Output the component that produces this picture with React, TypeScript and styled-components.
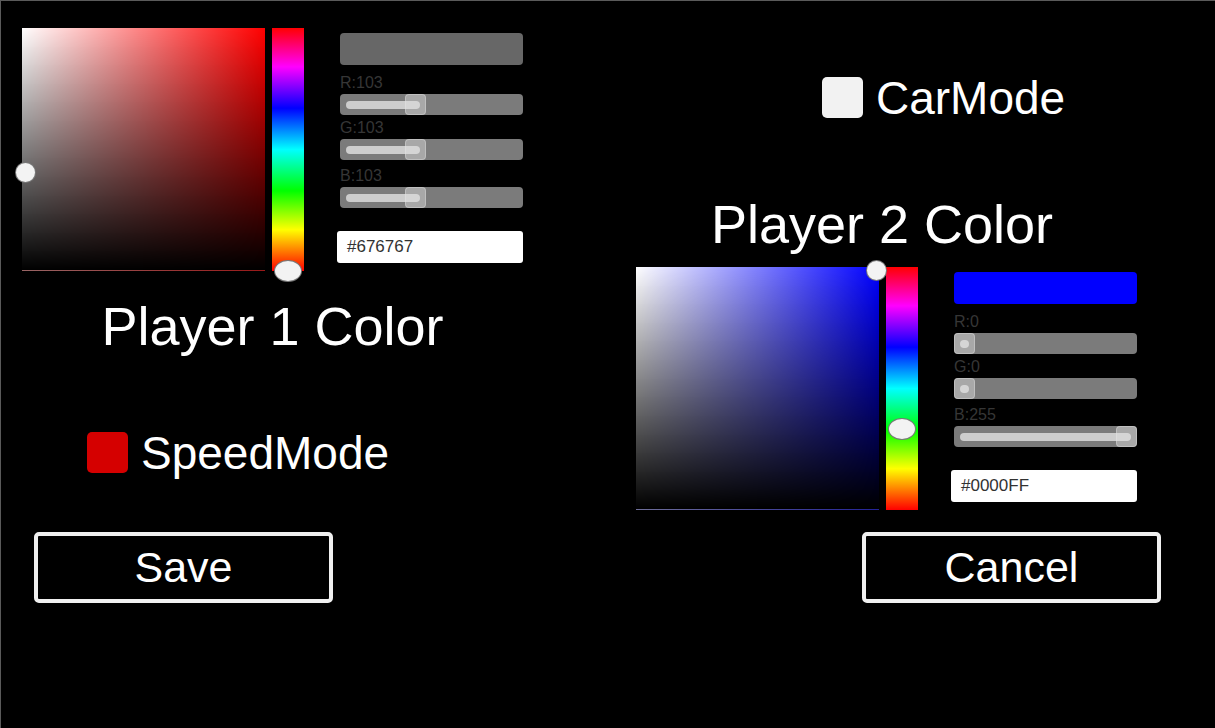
import { ReactElement } from "react";
import styled, { createGlobalStyle } from "styled-components";

const GlobalStyle = createGlobalStyle`
  html, body {
    margin: 0;
    padding: 0;
    background: #000000;
  }

  * {
    box-sizing: border-box;
  }
`;

type Channel = { name: string; value: number; space: number };

type PickerProps = {
  hue: string;
  edge: string;
  swatch: string;
  hex: string;
  channels: Channel[];
  sat: number;
  val: number;
  hueAt: number;
};

const SQUARE = 243;
const TRACK = 183;
const KNOB = 21;

const ColorPicker = ({ hue, edge, swatch, hex, channels, sat, val, hueAt }: PickerProps): ReactElement => {
  return (
    <PickerRow>
      <SvSquare $hue={hue} $edge={edge}>
        <SvHandle
          style={{
            left: 3 + sat * (SQUARE - 6) - 10.5,
            top: 3 + (1 - val) * (SQUARE - 6) - 10.5,
          }}
        />
      </SvSquare>

      <HueBar>
        <HueHandle style={{ top: hueAt * SQUARE - 11 }} />
      </HueBar>

      <Panel>
        <Swatch $color={swatch} />
        {channels.map((ch) => {
          const knobLeft = (ch.value / 255) * (TRACK - KNOB);
          return (
            <div key={ch.name}>
              <ChannelLabel $space={ch.space}>
                {ch.name}:{ch.value}
              </ChannelLabel>
              <Track>
                <Fill style={{ width: knobLeft + 8.5 }} />
                <Knob style={{ left: knobLeft }} />
              </Track>
            </div>
          );
        })}
        <HexField>{hex}</HexField>
      </Panel>
    </PickerRow>
  );
};

const App = (): ReactElement => {
  return (
    <>
      <GlobalStyle />
      <Page>
        <LeftColumn>
          <ColorPicker
            hue="#ff0000"
            edge="rgba(110, 35, 35, 0.7)"
            swatch="#676767"
            hex="#676767"
            channels={[
              { name: "R", value: 103, space: 29 },
              { name: "G", value: 103, space: 24 },
              { name: "B", value: 103, space: 27 },
            ]}
            sat={0}
            val={0.404}
            hueAt={1}
          />
          <Title>Player 1 Color</Title>
          <ToggleRow $indent={65} $top={79}>
            <CheckBox $color="#d50000" />
            <ToggleText>SpeedMode</ToggleText>
          </ToggleRow>
          <OutlineButton $indent={12} $top={59}>
            Save
          </OutlineButton>
        </LeftColumn>

        <RightColumn>
          <ToggleRow $indent={186} $top={0}>
            <CheckBox $color="#f2f2f2" />
            <ToggleText>CarMode</ToggleText>
          </ToggleRow>
          <Title $shift={9} $top={80}>
            Player 2 Color
          </Title>
          <PickerSlot>
            <ColorPicker
              hue="#0000ff"
              edge="rgba(50, 50, 110, 0.7)"
              swatch="#0000ff"
              hex="#0000FF"
              channels={[
                { name: "R", value: 0, space: 29 },
                { name: "G", value: 0, space: 24 },
                { name: "B", value: 255, space: 27 },
              ]}
              sat={1}
              val={1}
              hueAt={0.667}
            />
          </PickerSlot>
          <OutlineButton $indent={226} $top={22}>
            Cancel
          </OutlineButton>
        </RightColumn>
      </Page>
    </>
  );
};

const Page = styled.main`
  width: 1215px;
  height: 728px;
  display: grid;
  grid-template-columns: 635px 1fr;
  align-items: start;
  background: #000000;
  border-top: 1px solid #5a5a5a;
  border-left: 1px solid #5a5a5a;
  font-family: "Liberation Sans", Arial, sans-serif;
  color: #ffffff;
  overflow: hidden;
`;

const LeftColumn = styled.section`
  display: flex;
  flex-direction: column;
  padding: 27px 0 0 21px;
`;

const RightColumn = styled.section`
  display: flex;
  flex-direction: column;
  padding-top: 76px;
`;

const PickerSlot = styled.div`
  margin-top: 16px;
`;

const PickerRow = styled.div`
  display: flex;
  align-items: flex-start;
  width: 501px;
`;

const SvSquare = styled.div<{ $hue: string; $edge: string }>`
  position: relative;
  width: ${SQUARE}px;
  height: ${SQUARE}px;
  flex-shrink: 0;
  background: linear-gradient(to top, #000000, rgba(0, 0, 0, 0)),
    linear-gradient(to right, #ffffff, ${(p) => p.$hue});
  border-bottom: 1px solid ${(p) => p.$edge};
`;

const SvHandle = styled.span`
  position: absolute;
  width: 21px;
  height: 21px;
  border-radius: 50%;
  background: #f3f3f3;
  border: 1px solid rgba(90, 90, 90, 0.8);
  z-index: 2;
`;

const HueBar = styled.div`
  position: relative;
  width: 32px;
  height: ${SQUARE}px;
  margin-left: 7px;
  flex-shrink: 0;
  background: linear-gradient(
    to bottom,
    #ff0000 0%,
    #ff00ff 16%,
    #0000ff 33%,
    #00ffff 50%,
    #00ff00 67%,
    #ffff00 83%,
    #ff0000 100%
  );
`;

const HueHandle = styled.span`
  position: absolute;
  left: 2px;
  width: 28px;
  height: 22px;
  border-radius: 50%;
  background: #f3f3f3;
  border: 1px solid rgba(90, 90, 90, 0.8);
`;

const Panel = styled.div`
  display: flex;
  flex-direction: column;
  width: 186px;
  margin-left: 33px;
  padding-top: 5px;
`;

const Swatch = styled.div<{ $color: string }>`
  width: ${TRACK}px;
  height: 32px;
  margin-left: 3px;
  border-radius: 4px;
  background: ${(p) => p.$color};
`;

const ChannelLabel = styled.div<{ $space: number }>`
  height: ${(p) => p.$space}px;
  margin-left: 3px;
  display: flex;
  align-items: flex-end;
  padding-bottom: 3px;
  font-size: 16px;
  line-height: 1;
  color: #363636;
`;

const Track = styled.div`
  position: relative;
  width: ${TRACK}px;
  height: ${KNOB}px;
  margin-left: 3px;
  border-radius: 4px;
  background: #7b7b7b;
`;

const Fill = styled.span`
  position: absolute;
  left: 6px;
  top: 7px;
  height: 8px;
  border-radius: 4px;
  background: #cdcdcd;
`;

const Knob = styled.span`
  position: absolute;
  top: 0;
  width: ${KNOB}px;
  height: ${KNOB}px;
  border-radius: 4px;
  background: rgba(225, 225, 225, 0.45);
  border: 1px solid rgba(235, 235, 235, 0.35);
`;

const HexField = styled.div`
  width: 186px;
  height: 32px;
  margin-top: 23px;
  padding-left: 10px;
  display: flex;
  align-items: center;
  border-radius: 3px;
  background: #ffffff;
  color: #323232;
  font-size: 17px;
`;

const Title = styled.h1<{ $shift?: number; $top?: number }>`
  width: 501px;
  margin: ${(p) => p.$top ?? 29}px 0 0;
  padding-right: ${(p) => p.$shift ?? 0}px;
  text-align: center;
  font-size: 54px;
  font-weight: 400;
  line-height: 53px;
  color: #ffffff;
`;

const ToggleRow = styled.div<{ $indent: number; $top: number }>`
  display: flex;
  align-items: center;
  gap: 13px;
  margin: ${(p) => p.$top}px 0 0 ${(p) => p.$indent}px;
  height: 41px;
`;

const CheckBox = styled.span<{ $color: string }>`
  width: 41px;
  height: 41px;
  border-radius: 5px;
  background: ${(p) => p.$color};
`;

const ToggleText = styled.span`
  font-size: 46px;
  line-height: 1;
  color: #ffffff;
`;

const OutlineButton = styled.button<{ $indent: number; $top: number }>`
  width: 299px;
  height: 71px;
  margin: ${(p) => p.$top}px 0 0 ${(p) => p.$indent}px;
  display: flex;
  align-items: center;
  justify-content: center;
  background: #000000;
  border: 4px solid #f0f0f0;
  border-radius: 5px;
  color: #ffffff;
  font-family: "Liberation Sans", Arial, sans-serif;
  font-size: 43px;
  padding: 0;
`;

export default App;
